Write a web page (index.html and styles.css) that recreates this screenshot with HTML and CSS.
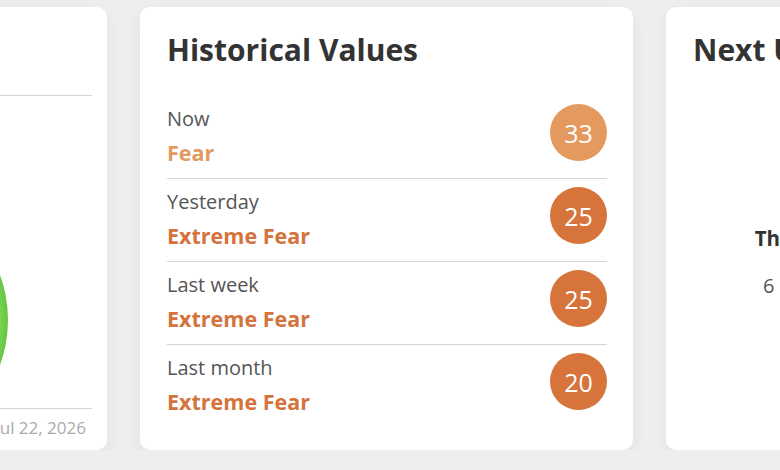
FILE: index.html
```html
<!DOCTYPE html>
<html lang="en">

<head>
    <meta charset="UTF-8">
    <meta name="viewport" content="width=device-width, initial-scale=1.0">
    <title>Fear &amp; Greed Index</title>
    <link rel="stylesheet" href="styles.css">
</head>

<body>
    <div class="track">
        <!-- gauge card -->
        <div class="card gauge-card">
            <h2>Fear &amp; Greed Index</h2>
            <div class="gauge">
                <svg width="451" height="312" viewBox="0 0 451 312">
                    <defs>
                        <radialGradient id="ball" cx="0.5" cy="0.5" r="0.5">
                            <stop offset="0" stop-color="#8ae25e" />
                            <stop offset="0.93" stop-color="#78d84e" />
                            <stop offset="1" stop-color="#66c442" />
                        </radialGradient>
                    </defs>
                    <circle cx="237" cy="224" r="130" fill="url(#ball)" />
                </svg>
            </div>
            <p class="updated">Last updated: Jul 22, 2026</p>
        </div>

        <!-- historical values -->
        <div class="card">
            <h2>Historical Values</h2>
            <div class="row">
                <div>
                    <div class="label">Now</div>
                    <div class="status fear">Fear</div>
                </div>
                <div class="score fear-bg">33</div>
            </div>
            <div class="row">
                <div>
                    <div class="label">Yesterday</div>
                    <div class="status extreme">Extreme Fear</div>
                </div>
                <div class="score extreme-bg">25</div>
            </div>
            <div class="row">
                <div>
                    <div class="label">Last week</div>
                    <div class="status extreme">Extreme Fear</div>
                </div>
                <div class="score extreme-bg">25</div>
            </div>
            <div class="row">
                <div>
                    <div class="label">Last month</div>
                    <div class="status extreme">Extreme Fear</div>
                </div>
                <div class="score extreme-bg">20</div>
            </div>
        </div>

        <!-- countdown -->
        <div class="card">
            <h2>Next Update</h2>
            <div class="countdown">
                <p class="when">The next update will happen in</p>
                <p class="left">6 hours, 27 minutes, 14 seconds</p>
            </div>
        </div>
    </div>
</body>

</html>
```

FILE: styles.css
```css
body {
    font-family: "Open Sans", Lato, sans-serif;
    margin: 0;
    padding: 0;
    background-color: #eeeeee;
    overflow: hidden;
}

.track {
    display: flex;
    gap: 33px;
    margin-left: -386px;
    padding-top: 7px;
}

.card {
    flex: 0 0 493px;
    height: 443px;
    box-sizing: border-box;
    padding: 25px 26px 0 27px;
    background-color: white;
    border-radius: 10px;
    box-shadow: 0 6px 16px rgba(0, 0, 0, 0.06);
}

h2 {
    margin: 0 0 28px;
    font-size: 30px;
    line-height: 36px;
    font-weight: 700;
    color: #333;
}

.row {
    display: flex;
    justify-content: space-between;
    align-items: flex-start;
    height: 83px;
    padding-top: 8px;
    box-sizing: border-box;
    border-bottom: 1px solid #d4d4d4;
}

.row:last-child {
    border-bottom: none;
}

.label {
    font-size: 20px;
    line-height: 30px;
    color: #555;
}

.status {
    font-size: 21.5px;
    line-height: 38px;
    font-weight: 700;
}

.fear {
    color: #e19a5f;
}

.extreme {
    color: #d4733b;
}

.score {
    width: 57px;
    height: 57px;
    border-radius: 50%;
    display: flex;
    justify-content: center;
    align-items: center;
    color: white;
    font-size: 25px;
}

.fear-bg {
    background-color: #e49a5e;
}

.extreme-bg {
    background-color: #d6743b;
}

/* gauge card */
.gauge-card {
    padding-right: 15px;
}

.gauge {
    margin-top: -1px;
    border-top: 1px solid #d4d4d4;
    border-bottom: 1px solid #d4d4d4;
    height: 312px;
    overflow: hidden;
}

.gauge svg {
    display: block;
}

.updated {
    margin: 7px 6px 0 0;
    text-align: right;
    font-size: 17px;
    color: #aaa;
}

/* countdown card */
.countdown {
    text-align: center;
    padding-top: 128px;
}

.countdown p {
    margin: 0;
}

.when {
    font-size: 20.5px;
    font-weight: 700;
    color: #333;
}

.left {
    margin-top: 20px !important;
    font-size: 20px;
    color: #555;
}
```
